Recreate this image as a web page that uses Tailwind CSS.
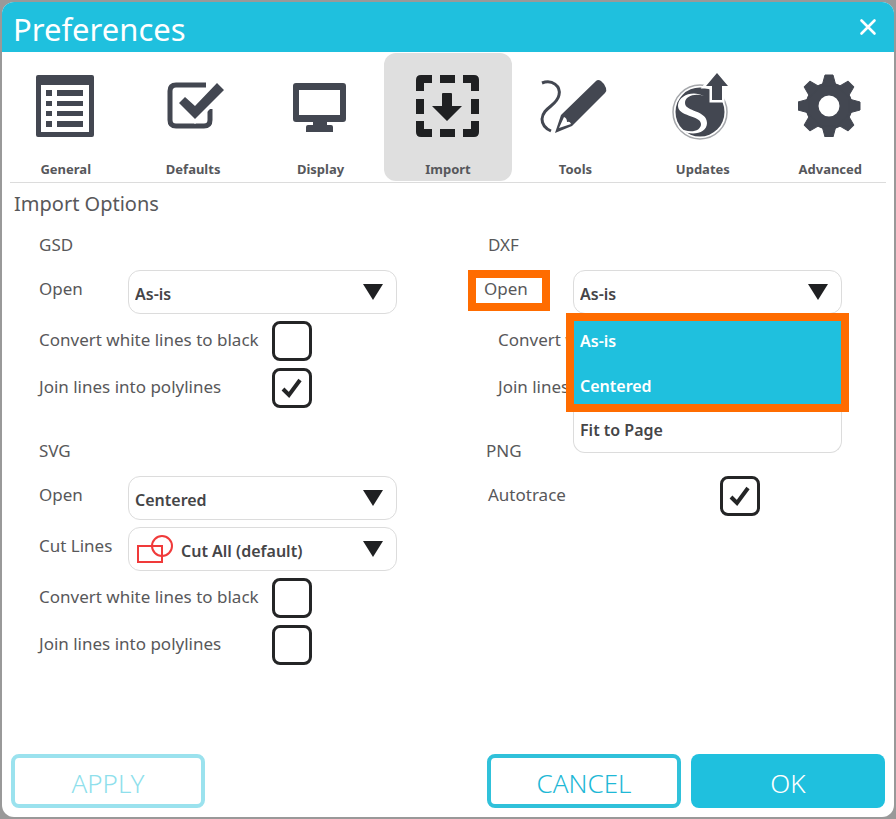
<!DOCTYPE html>
<html lang="en">

<head>
    <meta charset="UTF-8" />
    <meta name="viewport" content="width=device-width, initial-scale=1.0" />
    <title>Preferences</title>
    <script src="https://cdn.jsdelivr.net/npm/@tailwindcss/browser@4"></script>
</head>

<body class="bg-[#999999] font-['Noto_Sans','Open_Sans',sans-serif] text-[#58585a]">
    <div class="min-h-screen flex flex-col p-0.5">
        <div class="flex-1 flex flex-col bg-white rounded-xl">
            <!-- TITLE BAR -->
            <header class="bg-[#1fc0de] rounded-t-xl h-[50px] pl-[11px] pr-3.5 flex justify-between items-center text-white">
                <h1 class="text-[31px] leading-10 pt-1">Preferences</h1>
                <button type="button" aria-label="Close" class="p-0.5">
                    <svg class="size-5" viewBox="0 0 20 20" fill="none" stroke="currentColor" stroke-width="2.6" stroke-linecap="round">
                        <path d="M3.500 3.500L16.500 16.500M16.500 3.500L3.500 16.500" />
                    </svg>
                </button>
            </header>

            <!-- TABS -->
            <nav class="grid grid-cols-7 pt-px text-[13px] leading-5 font-bold text-[#56575b]">
                <button type="button" class="h-32 rounded-xl flex flex-col items-center justify-between pt-5 pb-0.5">
                    <svg class="w-16 h-16" viewBox="0 0 64 64" fill="#434751">
                        <path fill-rule="evenodd" d="M4 2H58Q60 2 60 4V62Q60 64 58 64H4Q2 64 2 62V4Q2 2 4 2ZM7 12V59H55V12Z" />
                        <path d="M12 17h6v6h-6zM23 17h26v6H23zM12 28h6v5h-6zM23 28h26v5H23zM12 38h6v5h-6zM23 38h26v5H23zM12 48h6v6h-6zM23 48h26v6H23z" />
                    </svg>
                    General
                </button>
                <button type="button" class="h-32 rounded-xl flex flex-col items-center justify-between pt-5 pb-0.5">
                    <svg class="w-16 h-16" viewBox="0 0 64 64">
                        <path d="M45 12H15Q9 12 9 18V47Q9 53 15 53H43Q49 53 49 47V36" fill="none" stroke="#434751" stroke-width="5" />
                        <path d="M18 30L24 24L34 33L56 10L63 17L34 46Z" fill="#434751" stroke="#fff" stroke-width="7" paint-order="stroke" />
                    </svg>
                    Defaults
                </button>
                <button type="button" class="h-32 rounded-xl flex flex-col items-center justify-between pt-5 pb-0.5">
                    <svg class="w-16 h-16" viewBox="0 0 64 64" fill="#434751">
                        <path fill-rule="evenodd" d="M7 10H54Q57 10 57 13V46Q57 49 54 49H38V52H42Q44 52 44 54V59H17V54Q17 52 19 52H24V49H7Q4 49 4 46V13Q4 10 7 10ZM10 17V42H51V17Z" />
                    </svg>
                    Display
                </button>
                <button type="button" aria-current="page" class="h-32 rounded-xl bg-[#dfdfdf] flex flex-col items-center justify-between pt-5 pb-0.5">
                    <svg class="w-16 h-16" viewBox="0 0 64 64" fill="#1f2022">
                        <path d="M16 2V10H8V18H0V7Q0 2 5 2ZM24 2H39V10H24ZM47 2H58Q63 2 63 7V18H55V10H47ZM0 26H8V41H0ZM55 26H63V41H55ZM0 48H8V56H16V64H5Q0 64 0 59ZM24 56H39V64H24ZM63 48V59Q63 64 58 64H47V56H55V48Z" />
                        <path d="M26 21Q26 20 27 20H35Q36 20 36 21V33H46L31 48L16 33H26Z" />
                    </svg>
                    Import
                </button>
                <button type="button" class="h-32 rounded-xl flex flex-col items-center justify-between pt-5 pb-0.5">
                    <svg class="w-18 h-16" viewBox="0 0 72 64">
                        <path d="M3 10C13 6 22 13 20 22C18 33 4 34 3 46Q3 54 12 58" fill="none" stroke="#434751" stroke-width="3" />
                        <path d="M57 8Q59 6 62 8Q66 11 67 15Q68 18 66 20L33 53L16 60L22 42Z" fill="#434751" />
                        <path d="M25 44L20 55L32 51Q31 48 28 49Q28 45 25 44Z" fill="#fff" />
                    </svg>
                    Tools
                </button>
                <button type="button" class="h-32 rounded-xl flex flex-col items-center justify-between pt-5 pb-0.5">
                    <svg class="w-16 h-[68px] -mt-px" viewBox="0 0 64 68">
                        <circle cx="29" cy="40" r="27" fill="#fff" stroke="#a5a7ab" stroke-width="1.500" />
                        <circle cx="29" cy="40" r="24.500" fill="#434751" />
                        <path d="M33 24C24 21 14 24 14 31C14 40 36 38 36 51C36 61 21 65 10 58L7 55C17 62 30 60 30 52C30 43 6 45 7 33C8 23 22 18 33 24Z" fill="#fff" />
                        <path d="M46 1L57 14H51V28H41V14H35Z" fill="#434751" stroke="#fff" stroke-width="5" paint-order="stroke" />
                    </svg>
                    Updates
                </button>
                <button type="button" class="h-32 rounded-xl flex flex-col items-center justify-between pt-5 pb-0.5">
                    <svg class="w-16 h-16" viewBox="-31 -33 64 64">
                        <g fill="#434751" stroke="#434751" stroke-linejoin="round">
                            <circle r="17" fill="none" stroke-width="13" />
                            <path id="tooth" stroke-width="1" d="M-7 -20L-4 -31H4L7 -20Z" />
                            <use href="#tooth" transform="rotate(45)" />
                            <use href="#tooth" transform="rotate(90)" />
                            <use href="#tooth" transform="rotate(135)" />
                            <use href="#tooth" transform="rotate(180)" />
                            <use href="#tooth" transform="rotate(225)" />
                            <use href="#tooth" transform="rotate(270)" />
                            <use href="#tooth" transform="rotate(315)" />
                        </g>
                    </svg>
                    Advanced
                </button>
            </nav>
            <hr class="mx-2 mt-px border-[#dcdcdc]" />

            <!-- IMPORT OPTIONS -->
            <main class="flex-1 text-[17px] leading-6">
                <h2 class="pl-3 pt-[7px] text-[20px] leading-7">Import Options</h2>

                <div class="grid grid-cols-2 mt-[15px]">
                    <div class="pl-[37px]">
                        <section class="flex flex-col gap-[7px]">
                            <h3 class="mb-1.5">GSD</h3>
                            <div class="flex">
                                <label for="gsdOpen" class="w-[89px] pt-[7px]">Open</label>
                                <div class="relative w-[269px]">
                                    <select id="gsdOpen" class="appearance-none w-full h-11 border border-[#dcdcdc] rounded-xl pl-1.5 pt-1 text-[16px] font-semibold text-[#454547]">
                                        <option>As-is</option>
                                        <option>Centered</option>
                                        <option>Fit to Page</option>
                                    </select>
                                    <svg class="absolute right-3.5 top-3.5 w-5 h-4 pointer-events-none" viewBox="0 0 20 16"><path d="M0 0H20L10 16Z" fill="#1f2022" /></svg>
                                </div>
                            </div>
                            <div class="flex">
                                <label for="gsdConvert" class="w-[233px] pt-[7px]">Convert white lines to black</label>
                                <input type="checkbox" id="gsdConvert" class="appearance-none size-10 border-[3px] border-[#242526] rounded-lg" />
                            </div>
                            <div class="flex">
                                <label for="gsdJoin" class="w-[233px] pt-[7px]">Join lines into polylines</label>
                                <div class="relative size-10">
                                    <input type="checkbox" id="gsdJoin" checked class="block appearance-none size-10 border-[3px] border-[#242526] rounded-lg" />
                                    <svg class="absolute inset-0 size-10 pointer-events-none" viewBox="0 0 40 40" fill="none" stroke="#242526" stroke-width="4"><path d="M11 21L17 27L28 12" /></svg>
                                </div>
                            </div>
                        </section>

                        <section class="flex flex-col gap-[7px] mt-[31px]">
                            <h3 class="mb-1.5">SVG</h3>
                            <div class="flex">
                                <label for="svgOpen" class="w-[89px] pt-[7px]">Open</label>
                                <div class="relative w-[269px]">
                                    <select id="svgOpen" class="appearance-none w-full h-11 border border-[#dcdcdc] rounded-xl pl-1.5 pt-1 text-[16px] font-semibold text-[#454547]">
                                        <option>As-is</option>
                                        <option selected>Centered</option>
                                        <option>Fit to Page</option>
                                    </select>
                                    <svg class="absolute right-3.5 top-3.5 w-5 h-4 pointer-events-none" viewBox="0 0 20 16"><path d="M0 0H20L10 16Z" fill="#1f2022" /></svg>
                                </div>
                            </div>
                            <div class="flex">
                                <label for="svgCut" class="w-[89px] pt-[7px]">Cut Lines</label>
                                <div class="relative w-[269px]">
                                    <select id="svgCut" class="appearance-none w-full h-11 border border-[#dcdcdc] rounded-xl pl-[52px] pt-1 text-[16px] font-semibold text-[#454547]">
                                        <option>Cut All (default)</option>
                                        <option>No Cut</option>
                                    </select>
                                    <svg class="absolute left-2 top-2 w-10 h-7 pointer-events-none" viewBox="0 0 40 28" fill="none" stroke="#f03a3a" stroke-width="2"><rect x="2" y="11" width="24" height="16" /><circle cx="26" cy="11" r="10" /></svg>
                                    <svg class="absolute right-3.5 top-3.5 w-5 h-4 pointer-events-none" viewBox="0 0 20 16"><path d="M0 0H20L10 16Z" fill="#1f2022" /></svg>
                                </div>
                            </div>
                            <div class="flex">
                                <label for="svgConvert" class="w-[233px] pt-[7px]">Convert white lines to black</label>
                                <input type="checkbox" id="svgConvert" class="appearance-none size-10 border-[3px] border-[#242526] rounded-lg" />
                            </div>
                            <div class="flex">
                                <label for="svgJoin" class="w-[233px] pt-[7px]">Join lines into polylines</label>
                                <input type="checkbox" id="svgJoin" class="appearance-none size-10 border-[3px] border-[#242526] rounded-lg" />
                            </div>
                        </section>
                    </div>

                    <div class="pl-9">
                        <section class="flex flex-col gap-[7px]">
                            <h3 class="mb-1.5 pl-1">DXF</h3>
                            <div class="flex">
                                <div class="relative w-[89px] pt-[7px]">
                                    <label for="dxfOpen">Open</label>
                                    <!-- callout frame -->
                                    <div class="absolute -left-4 top-0 w-[82px] h-[41px] border-8 border-[#ff6c00] pointer-events-none"></div>
                                </div>
                                <div class="relative w-[269px]">
                                    <select id="dxfOpen" class="appearance-none w-full h-11 border border-[#dcdcdc] rounded-xl pl-1.5 pt-1 text-[16px] font-semibold text-[#454547]">
                                        <option>As-is</option>
                                        <option>Centered</option>
                                        <option>Fit to Page</option>
                                    </select>
                                    <svg class="absolute right-3.5 top-3.5 w-5 h-4 pointer-events-none" viewBox="0 0 20 16"><path d="M0 0H20L10 16Z" fill="#1f2022" /></svg>
                                    <!-- open drop-down list -->
                                    <ul role="listbox" class="absolute z-10 left-0 top-11 w-full pt-1 bg-white border border-t-0 border-[#dcdcdc] rounded-b-xl text-[16px] font-semibold text-[#454547]">
                                        <li role="option" aria-selected="true" class="h-[45px] pl-1.5 flex items-center bg-[#1fc0de] text-white">As-is</li>
                                        <li role="option" class="h-[45px] pl-1.5 flex items-center bg-[#1fc0de] text-white">Centered</li>
                                        <li role="option" class="h-11 pl-1.5 flex items-center">Fit to Page</li>
                                    </ul>
                                    <div class="absolute z-20 -inset-x-[7px] top-[43px] h-[99px] border-8 border-[#ff6c00] pointer-events-none"></div>
                                </div>
                            </div>
                            <div class="flex pl-3.5">
                                <label for="dxfConvert" class="w-[222px] pt-[7px]">Convert white lines to black</label>
                                <input type="checkbox" id="dxfConvert" class="appearance-none size-10 border-[3px] border-[#242526] rounded-lg" />
                            </div>
                            <div class="flex pl-3.5">
                                <label for="dxfJoin" class="w-[222px] pt-[7px]">Join lines into polylines</label>
                                <input type="checkbox" id="dxfJoin" class="appearance-none size-10 border-[3px] border-[#242526] rounded-lg" />
                            </div>
                        </section>

                        <section class="flex flex-col gap-[7px] mt-[31px]">
                            <h3 class="mb-1.5 pl-0.5">PNG</h3>
                            <div class="flex pl-1">
                                <label for="pngTrace" class="w-[232px] pt-[7px]">Autotrace</label>
                                <div class="relative size-10">
                                    <input type="checkbox" id="pngTrace" checked class="block appearance-none size-10 border-[3px] border-[#242526] rounded-lg" />
                                    <svg class="absolute inset-0 size-10 pointer-events-none" viewBox="0 0 40 40" fill="none" stroke="#242526" stroke-width="4"><path d="M11 21L17 27L28 12" /></svg>
                                </div>
                            </div>
                        </section>
                    </div>
                </div>
            </main>

            <!-- ACTIONS -->
            <footer class="flex gap-2.5 px-[9px] pb-[9px] text-[26px] leading-8 font-light">
                <button type="button" disabled class="w-[194px] h-[54px] mr-auto pt-1 border-4 border-[#9be2ee] rounded-lg text-[#8fdfec]">APPLY</button>
                <button type="button" class="w-[194px] h-[54px] pt-1 border-4 border-[#30c1da] rounded-lg text-[#1fb8d6]">CANCEL</button>
                <button type="button" class="w-[194px] h-[54px] pt-1 bg-[#1fc0de] rounded-lg text-white">OK</button>
            </footer>
        </div>
    </div>
</body>

</html>
